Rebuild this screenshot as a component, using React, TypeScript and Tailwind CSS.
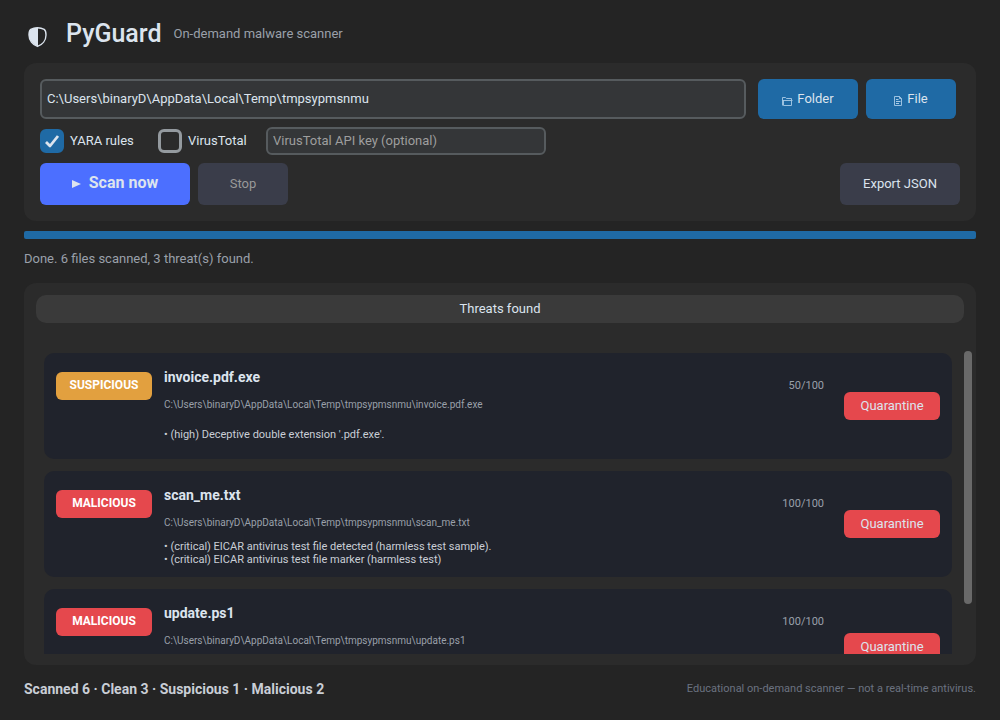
import { useState } from "react";
import type { UIEvent } from "react";

type Verdict = "SUSPICIOUS" | "MALICIOUS";

interface Threat {
  name: string;
  path: string;
  verdict: Verdict;
  score: number;
  findings: string[];
  size: string;
}

const TEMP = "C:\\Users\\binaryD\\AppData\\Local\\Temp\\tmpsypmsnmu";

const threats: Threat[] = [
  {
    name: "invoice.pdf.exe",
    path: TEMP + "\\invoice.pdf.exe",
    verdict: "SUSPICIOUS",
    score: 50,
    findings: ["• (high) Deceptive double extension '.pdf.exe'."],
    size: "min-h-[106px]",
  },
  {
    name: "scan_me.txt",
    path: TEMP + "\\scan_me.txt",
    verdict: "MALICIOUS",
    score: 100,
    findings: [
      "• (critical) EICAR antivirus test file detected (harmless test sample).",
      "• (critical) EICAR antivirus test file marker (harmless test)",
    ],
    size: "min-h-[106px]",
  },
  {
    name: "update.ps1",
    path: TEMP + "\\update.ps1",
    verdict: "MALICIOUS",
    score: 100,
    findings: [],
    size: "min-h-[116px]",
  },
];

const badgeColor: Record<Verdict, string> = {
  SUSPICIOUS: "bg-[#e2a03f]",
  MALICIOUS: "bg-[#e5484d]",
};

function ShieldIcon() {
  return (
    <svg width="20" height="22" viewBox="0 0 20 22" aria-hidden="true">
      <path
        d="M9.5 1.8C11.5 1.8 14 2.2 16.2 3.4C17.8 4.6 18 6.4 18 9C18 14.2 14.4 18.6 9.5 20.4C4.6 18.6 1 14.2 1 9C1 6.4 1.2 4.6 2.8 3.4C5 2.2 7.5 1.8 9.5 1.8Z"
        fill="none"
        stroke="#dce4ee"
        strokeWidth="1.4"
      />
      <path
        d="M10 1.8V20.4C4.6 18.6 1 14.2 1 9C1 6.4 1.2 4.6 2.8 3.4C5 2.2 7.5 1.8 10 1.8Z"
        fill="#dce4ee"
      />
    </svg>
  );
}

function FolderIcon() {
  return (
    <svg className="mt-1" width="11" height="10" viewBox="0 0 11 10" fill="none" stroke="#a9cbe6" aria-hidden="true">
      <path d="M.5 9.5V1.5H3.5L4.5 2.5H9.5V4M.5 4.5H10.5M1.5 4.5V9.5H9.5V4.5" strokeWidth=".9" />
    </svg>
  );
}

function FileIcon() {
  return (
    <svg className="mt-1" width="9" height="10" viewBox="0 0 9 10" fill="none" stroke="#a9cbe6" aria-hidden="true">
      <path d="M.5 .5H5.5L7.5 2.5V9.5H.5ZM5.5 .5V2.5H7.5" strokeWidth=".9" />
      <path d="M2 3.5H4.5M2 5.5H6.5M2 7.5H5" />
    </svg>
  );
}

function Check({ label, initial }: { label: string; initial: boolean }) {
  const [on, setOn] = useState(initial);
  return (
    <label className="flex w-[100px] items-center gap-1.5 whitespace-nowrap">
      <span className="relative flex size-6 shrink-0">
        <input
          type="checkbox"
          checked={on}
          onChange={(e) => setOn(e.target.checked)}
          className="size-6 appearance-none rounded-md border-3 border-[#949a9f] checked:border-[#1f6aa5] checked:bg-[#1f6aa5]"
        />
        {on && (
          <svg className="pointer-events-none absolute inset-0" width="24" height="24" viewBox="0 0 24 24" fill="none" aria-hidden="true">
            <path d="M6 13L10 17L18 7" stroke="#dce4ee" strokeWidth="2.8" strokeLinejoin="round" />
          </svg>
        )}
      </span>
      {label}
    </label>
  );
}

function ThreatCard({ threat }: { threat: Threat }) {
  return (
    <li className={"flex shrink-0 rounded-[10px] bg-[#20232c] px-3 " + threat.size}>
      <span
        className={
          "mt-[19px] flex h-7 w-24 shrink-0 items-center justify-center rounded-md pb-0.5 text-[12px] font-bold text-white " +
          badgeColor[threat.verdict]
        }
      >
        {threat.verdict}
      </span>
      <div className="ml-3 flex min-w-0 flex-1 flex-col pt-4">
        <h3 className="text-[14px] leading-4 font-bold">{threat.name}</h3>
        <p className="mt-3 truncate text-[10px] leading-4 text-[#9aa0aa]">{threat.path}</p>
        <div className="flex h-[43px] flex-col justify-center text-[11px] leading-[13px] text-[#c9ced6]">
          {threat.findings.map((f) => (
            <p key={f}>{f}</p>
          ))}
        </div>
      </div>
      <span className="mt-[25px] mr-5 text-[11px] leading-4 text-[#9aa0aa]">{threat.score}/100</span>
      <button type="button" className="h-7 w-24 shrink-0 self-center rounded-md bg-[#e5484d]">
        Quarantine
      </button>
    </li>
  );
}

export default function App() {
  const [target, setTarget] = useState(TEMP);
  const [apiKey, setApiKey] = useState("");
  const [offset, setOffset] = useState(0);

  const onScroll = (e: UIEvent<HTMLUListElement>) => {
    const el = e.currentTarget;
    const range = el.scrollHeight - el.clientHeight;
    setOffset(range > 0 ? (el.scrollTop / range) * 50 : 0);
  };

  return (
    <main className="flex h-screen flex-col bg-[#242424] px-6 font-[Roboto,sans-serif] text-[13px] text-[#dce4ee]">
      <header className="flex h-[63px] shrink-0 items-center pt-1">
        <div className="ml-1 mt-1.5 flex w-[38px]">
          <ShieldIcon />
        </div>
        <h1 className="text-[25px] leading-8 font-medium">PyGuard</h1>
        <p className="ml-3 text-[#9aa0aa]">On-demand malware scanner</p>
      </header>

      <section aria-label="Scan options" className="flex shrink-0 flex-col gap-2 rounded-xl bg-[#2b2b2b] p-4">
        <div className="flex pr-1">
          <input
            aria-label="Scan target"
            value={target}
            onChange={(e) => setTarget(e.target.value)}
            className="mr-3 h-10 min-w-0 flex-1 rounded-md border-2 border-[#565b5e] bg-[#343638] px-[5px] pb-0.5 outline-none"
          />
          <button type="button" className="mr-2 flex h-10 w-[100px] items-center justify-center gap-1 rounded-md bg-[#1f6aa5]">
            <FolderIcon />
            Folder
          </button>
          <button type="button" className="flex h-10 w-[90px] items-center justify-center gap-1 rounded-md bg-[#1f6aa5]">
            <FileIcon />
            File
          </button>
        </div>
        <div className="flex items-center gap-2">
          <div className="flex gap-[18px]">
            <Check label="YARA rules" initial={true} />
            <Check label="VirusTotal" initial={false} />
          </div>
          <input
            aria-label="VirusTotal API key"
            placeholder="VirusTotal API key (optional)"
            value={apiKey}
            onChange={(e) => setApiKey(e.target.value)}
            className="h-7 w-[280px] rounded-md border-2 border-[#565b5e] bg-[#343638] px-[5px] pb-0.5 outline-none placeholder:text-[#9e9e9e]"
          />
        </div>
        <div className="flex gap-2">
          <button type="button" className="flex h-[42px] w-[150px] items-center justify-center gap-2 rounded-md bg-[#4c6fff] pb-0.5 text-[16px] font-bold">
            <svg className="mt-0.5" width="9" height="8" viewBox="0 0 9 8" aria-hidden="true">
              <path d="M0 0L9 4L0 8Z" fill="#dce4ee" />
            </svg>
            Scan now
          </button>
          <button type="button" disabled className="h-[42px] w-[90px] rounded-md bg-[#3a3d4a] text-[#999999]">
            Stop
          </button>
          <button type="button" className="ml-auto h-[42px] w-[120px] rounded-md bg-[#3a3d4a]">
            Export JSON
          </button>
        </div>
      </section>

      <div
        role="progressbar"
        aria-label="Scan progress"
        aria-valuenow={100}
        aria-valuemin={0}
        aria-valuemax={100}
        className="mt-2.5 h-2 shrink-0 rounded-xs bg-[#1f6aa5]"
      />
      <p className="mt-2.5 mb-[14px] shrink-0 leading-5 text-[#9aa0aa]">Done. 6 files scanned, 3 threat(s) found.</p>

      <section className="flex min-h-0 flex-1 flex-col rounded-xl bg-[#2b2b2b] pt-3 pb-[11px]">
        <h2 className="mx-3 flex h-7 shrink-0 items-center justify-center rounded-[10px] bg-[#3a3a3a]">Threats found</h2>
        <div className="mt-7 flex min-h-0 flex-1 pr-1">
          <ul onScroll={onScroll} className="mt-0.5 ml-5 flex min-w-0 flex-1 flex-col gap-3 overflow-y-auto [scrollbar-width:none]">
            {threats.map((t) => (
              <ThreatCard key={t.name} threat={t} />
            ))}
          </ul>
          <div
            aria-hidden="true"
            className="ml-3 h-5/6 w-2 rounded-sm bg-[#696969]"
            style={{ transform: `translateY(${offset}px)` }}
          />
        </div>
      </section>

      <footer className="flex h-[55px] shrink-0 items-center justify-between pb-1.5">
        <strong className="text-[14px] font-bold text-[#c9ced6]">Scanned 6 · Clean 3 · Suspicious 1 · Malicious 2</strong>
        <small className="text-[11px] text-[#6b7280]">Educational on-demand scanner — not a real-time antivirus.</small>
      </footer>
    </main>
  );
}
